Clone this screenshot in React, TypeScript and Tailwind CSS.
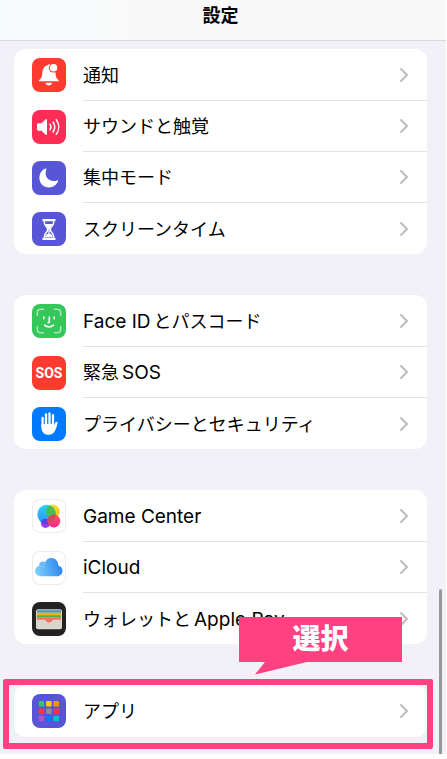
import React from "react";

function NotificationIcon() {
  return (
    <svg viewBox="0 0 34 34" className="w-[34px] h-[34px] rounded-lg bg-[#ff3b30]">
      <path
        d="M7.500 23.300c-.6 0-.8-.8-.3-1.200 1.900-1.500 2.700-2.800 3-6.400.4-4.900 2-7.900 5.400-8.500C16 6.500 16.500 6.300 17.200 6.300c.7 0 1.200.3 1.500.9 3 .8 4.500 3.800 4.900 8.500.3 3.600 1 4.900 2.900 6.400.5.4.3 1.200-.3 1.200z"
        fill="#fff"
      />
      <path d="M13.500 24.700h6.600c-.3 1.700-1.500 2.800-3.300 2.800s-3-1.100-3.300-2.800z" fill="#fff" />
      <circle cx="21.500" cy="9.800" r="4.800" fill="#ff3b30" />
      <circle cx="21.500" cy="9.800" r="3.800" fill="#fff" />
    </svg>
  );
}

function SoundIcon() {
  return (
    <svg viewBox="0 0 34 34" className="w-[34px] h-[34px] rounded-lg bg-[#ff2d55]">
      <path
        d="M6.500 13.200h3l4.200-3.900c.6-.5 1.300-.2 1.300.6v14.200c0 .8-.7 1.100-1.300.6l-4.200-3.900h-3c-.9 0-1.500-.6-1.500-1.500v-4.600c0-.9.6-1.500 1.500-1.500z"
        fill="#fff"
      />
      <g fill="none" stroke="#fff" strokeWidth="1.500" strokeLinecap="round">
        <path d="M18 14.200c1.100 1.700 1.100 3.900 0 5.600" />
        <path d="M21 12c2.100 3 2.100 7 0 10" />
        <path d="M24.300 9.700c3.200 4.400 3.200 10.200 0 14.600" />
      </g>
    </svg>
  );
}

function FocusIcon() {
  return (
    <svg viewBox="0 0 34 34" className="w-[34px] h-[34px] rounded-lg bg-[#5856d6]">
      <path
        d="M13.300 7.600c.6-.3 1.200.2 1 .8-1.300 3.600-.7 7 1.300 9.200 2.200 2.300 5.700 3 9.500 1.800.7-.2 1.200.3.9.9-1.600 3.900-5 6.200-9 6.200-5.500 0-9.600-4.100-9.600-9.500 0-4.200 2.200-7.800 5.900-9.400z"
        fill="#fff"
      />
    </svg>
  );
}

function ScreenTimeIcon() {
  return (
    <svg viewBox="0 0 34 34" className="w-[34px] h-[34px] rounded-lg bg-[#5856d6]">
      <path
        d="M12.300 8.500v2c0 3 3.300 4.100 3.300 6.500v1c0 2.400-3.300 3.500-3.300 6.500v2h9.400v-2c0-3-3.300-4.100-3.300-6.500v-1c0-2.400 3.300-3.500 3.300-6.500v-2z"
        fill="none"
        stroke="#fff"
        strokeWidth="1.500"
      />
      <path d="M11.300 8h11.400M11.300 27h11.400" stroke="#fff" strokeWidth="2.200" strokeLinecap="round" />
      <path
        d="M13.300 12h7.400c-.8 1.800-2.700 2.600-2.900 4.800l-.3 4.700c1.500.6 3 1.600 3.600 3.700h-8.200c.6-2.100 2.100-3.100 3.600-3.700l-.3-4.700c-.2-2.200-2.100-3-2.900-4.800z"
        fill="#fff"
      />
    </svg>
  );
}

function FaceIdIcon() {
  return (
    <svg viewBox="0 0 34 34" className="w-[34px] h-[34px] rounded-lg bg-[#34c759]">
      <g fill="none" strokeLinecap="round" strokeWidth="1.600">
        <path
          d="M5.300 11.500V8.800c0-2.200 1.200-3.500 3.500-3.500h2.700M22.500 5.300h2.700c2.200 0 3.500 1.300 3.500 3.500v2.700M28.700 22.500v2.700c0 2.200-1.300 3.500-3.500 3.500h-2.700M11.500 28.700H8.800c-2.300 0-3.500-1.300-3.500-3.500v-2.700"
          stroke="#a4e6b3"
        />
        <path
          d="M11.800 13v1.700M22.200 13v1.700M17.300 13v4.700c0 .7-.4 1-1.200 1M12.500 21.200c2.500 2.200 6.500 2.200 9 0"
          stroke="#fff"
        />
      </g>
    </svg>
  );
}

function SosIcon() {
  return (
    <span className="flex items-center justify-center w-[34px] h-[34px] rounded-lg bg-[#ff3b30] text-white text-[14px] font-bold font-['Roboto',sans-serif]">
      SOS
    </span>
  );
}

function PrivacyIcon() {
  return (
    <svg viewBox="0 0 34 34" className="w-[34px] h-[34px] rounded-lg bg-[#007aff]">
      <g fill="none" stroke="#fff" strokeWidth="2.300" strokeLinecap="round">
        <path d="M10.600 11v9M14 7.500V18M17.500 6.500V18M21 8.200V19M24.500 16l-2.500 5.500" />
      </g>
      <path
        d="M9.450 17h12.700v3l1.400-1.600 1.600.2-2 5c-1.100 2.600-3.200 4.200-6.400 4.200-4.600 0-7.300-2.900-7.300-7.300z"
        fill="#fff"
      />
    </svg>
  );
}

function GameCenterIcon() {
  return (
    <svg viewBox="0 0 34 34" className="w-[34px] h-[34px] rounded-lg bg-white inset-ring inset-ring-[#ececef]">
      <defs>
        <linearGradient id="gcBlue" x1="0" y1="0" x2="0" y2="1">
          <stop offset="0" stopColor="#28d6f5" />
          <stop offset="1" stopColor="#2f8cf7" />
        </linearGradient>
        <linearGradient id="gcYellow" x1="0" y1="0" x2="0" y2="1">
          <stop offset="0" stopColor="#ffe02e" />
          <stop offset="1" stopColor="#ffb01c" />
        </linearGradient>
        <linearGradient id="gcPink" x1="0" y1="0" x2="0" y2="1">
          <stop offset="0" stopColor="#ff5a4e" />
          <stop offset="1" stopColor="#ff2492" />
        </linearGradient>
        <clipPath id="gcClip">
          <ellipse cx="14.600" cy="15.500" rx="9.200" ry="9.800" />
        </clipPath>
      </defs>
      <circle cx="13.500" cy="24.300" r="4.600" fill="#a436ee" />
      <circle cx="20.800" cy="12.300" r="6.900" fill="url(#gcYellow)" />
      <ellipse cx="14.600" cy="15.500" rx="9.200" ry="9.800" fill="url(#gcBlue)" />
      <g clipPath="url(#gcClip)">
        <circle cx="13.500" cy="24.300" r="4.600" fill="#5a42dd" />
        <circle cx="20.800" cy="12.300" r="6.900" fill="#45bd55" />
      </g>
      <circle cx="21.900" cy="22" r="6.400" fill="url(#gcPink)" />
      <g clipPath="url(#gcClip)">
        <circle cx="21.900" cy="22" r="6.400" fill="#d5475f" />
      </g>
    </svg>
  );
}

function ICloudIcon() {
  return (
    <svg viewBox="0 0 34 34" className="w-[34px] h-[34px] rounded-lg bg-white inset-ring inset-ring-[#ececef]">
      <defs>
        <linearGradient id="cloud" x1="0" y1=".6" x2="1" y2=".4">
          <stop offset="0" stopColor="#7fcffb" />
          <stop offset="1" stopColor="#2782ee" />
        </linearGradient>
      </defs>
      <path
        d="M9 25.300c-3.500 0-6-2.200-6-5.200 0-2.500 1.600-4.400 4-5-.2-2.600 1.600-4.500 4-4.500.8 0 1.500.2 2.100.6C14.200 8.500 16.500 7 19.200 7c4.200 0 7.200 3.300 7 7.400 2.600.5 4.300 2.700 4.300 5.400 0 3.200-2.300 5.500-5.500 5.500z"
        fill="url(#cloud)"
      />
      <path
        d="M7 15.100c2.200-.4 3.800.2 5 1.600M13.100 11.200c-.9 1.400-1.300 2.700-1.200 4.200"
        fill="none"
        stroke="#91d3fa"
        strokeWidth=".7"
      />
    </svg>
  );
}

function WalletIcon() {
  return (
    <svg viewBox="0 0 34 34" className="w-[34px] h-[34px] rounded-lg bg-[#232323]">
      <rect x="4" y="7.300" width="26" height="20" rx="2" fill="#d9d6cc" />
      <path d="M5 10.800V9.300c0-.6.4-1 1-1h22c.6 0 1 .4 1 1v1.500z" fill="#3f9bc9" />
      <path d="M5 10.800h24v2.400H5z" fill="#f5b014" />
      <path d="M5 13.200h24v2.200H5z" fill="#4eb245" />
      <path d="M5 15.400h24v2.300h-7.500c-1.400 0-1.600 2.800-4.500 2.800s-3.100-2.800-4.500-2.800H5z" fill="#f17362" />
    </svg>
  );
}

const appColors = [
  "#34c759",
  "#ffcc00",
  "#ff9500",
  "#ff3b30",
  "#8e8e93",
  "#ff2d55",
  "#af52de",
  "#007aff",
  "#00c7be",
];

function AppsIcon() {
  return (
    <svg viewBox="0 0 34 34" className="w-[34px] h-[34px] rounded-lg bg-[#5856d6]">
      {appColors.map((color, i) => (
        <rect
          key={color}
          x={6.7 + (i % 3) * 7.4}
          y={7 + Math.floor(i / 3) * 7.4}
          width="5.500"
          height="5.500"
          rx="1"
          fill={color}
        />
      ))}
    </svg>
  );
}

function Latin({ children }: { children: React.ReactNode }) {
  return <span className="text-[19px]">{children}</span>;
}

function Row({ icon, label }: { icon: React.ReactNode; label: React.ReactNode }) {
  return (
    <li className="group">
      <button className="flex w-full items-center gap-[17px] pl-[18px] text-left">
        {icon}
        <span className="flex flex-1 h-[51px] group-first:h-[52px] items-center justify-between border-b border-[#e4e4e6] group-last:border-b-0 pr-[18px]">
          <span className="flex items-baseline gap-[3px] pt-0.5 whitespace-nowrap">{label}</span>
          <svg viewBox="0 0 10 16" className="w-[10px] h-4 shrink-0">
            <path
              d="M2 2l6 6-6 6"
              fill="none"
              stroke="#bdbdc0"
              strokeWidth="2"
              strokeLinecap="round"
              strokeLinejoin="round"
            />
          </svg>
        </span>
      </button>
    </li>
  );
}

function Group({ children }: { children: React.ReactNode }) {
  return <ul className="bg-white rounded-xl overflow-hidden">{children}</ul>;
}

export default function App() {
  return (
    <div className="bg-white pr-px pb-[5px] text-black text-[18px] leading-6 font-['Inter','Noto_Sans_CJK_JP',sans-serif]">
      <div className="relative bg-[#f2f1f7]">
        <header className="h-[41px] pt-1 pl-3.5 pr-[19px] border-b border-[#d9d9dd] bg-linear-to-r from-[#f6fbfe] to-[#f9f9f9] to-30%">
          <h1 className="text-center font-bold">設定</h1>
        </header>

        <main className="flex flex-col gap-[41px] pt-2 pb-[17px] pl-3.5 pr-[19px]">
          <Group>
            <Row icon={<NotificationIcon />} label="通知" />
            <Row icon={<SoundIcon />} label="サウンドと触覚" />
            <Row icon={<FocusIcon />} label="集中モード" />
            <Row icon={<ScreenTimeIcon />} label="スクリーンタイム" />
          </Group>

          <Group>
            <Row
              icon={<FaceIdIcon />}
              label={
                <>
                  <Latin>Face ID</Latin>
                  <span>とパスコード</span>
                </>
              }
            />
            <Row
              icon={<SosIcon />}
              label={
                <>
                  <span>緊急</span>
                  <Latin>SOS</Latin>
                </>
              }
            />
            <Row icon={<PrivacyIcon />} label="プライバシーとセキュリティ" />
          </Group>

          <Group>
            <Row icon={<GameCenterIcon />} label={<Latin>Game Center</Latin>} />
            <Row icon={<ICloudIcon />} label={<Latin>iCloud</Latin>} />
            <Row
              icon={<WalletIcon />}
              label={
                <>
                  <span>ウォレットと</span>
                  <Latin>Apple Pay</Latin>
                </>
              }
            />
          </Group>

          <div className="relative">
            <Group>
              <Row icon={<AppsIcon />} label="アプリ" />
            </Group>

            {/* highlight frame */}
            <div className="absolute -left-[11px] -right-1.5 -top-1.5 -bottom-3 border-6 border-[#ff4081] rounded-xs pointer-events-none" />

            {/* callout */}
            <div className="absolute left-[225px] -top-[68px] w-[163px] pointer-events-none">
              <p className="h-[45px] bg-[#ff4081] text-white text-[28px] leading-[44px] font-black text-center">
                選択
              </p>
              <svg viewBox="0 0 56 13" className="absolute left-4 top-[45px] w-14 h-[13px]">
                <path d="M10 0L0 12.500L52 0z" fill="#ff4081" />
              </svg>
            </div>
          </div>
        </main>

        {/* scrollbar */}
        <div className="absolute right-1 top-[589px] bottom-0 w-[3px] rounded-t-full bg-[#98979c]" />
      </div>
    </div>
  );
}
